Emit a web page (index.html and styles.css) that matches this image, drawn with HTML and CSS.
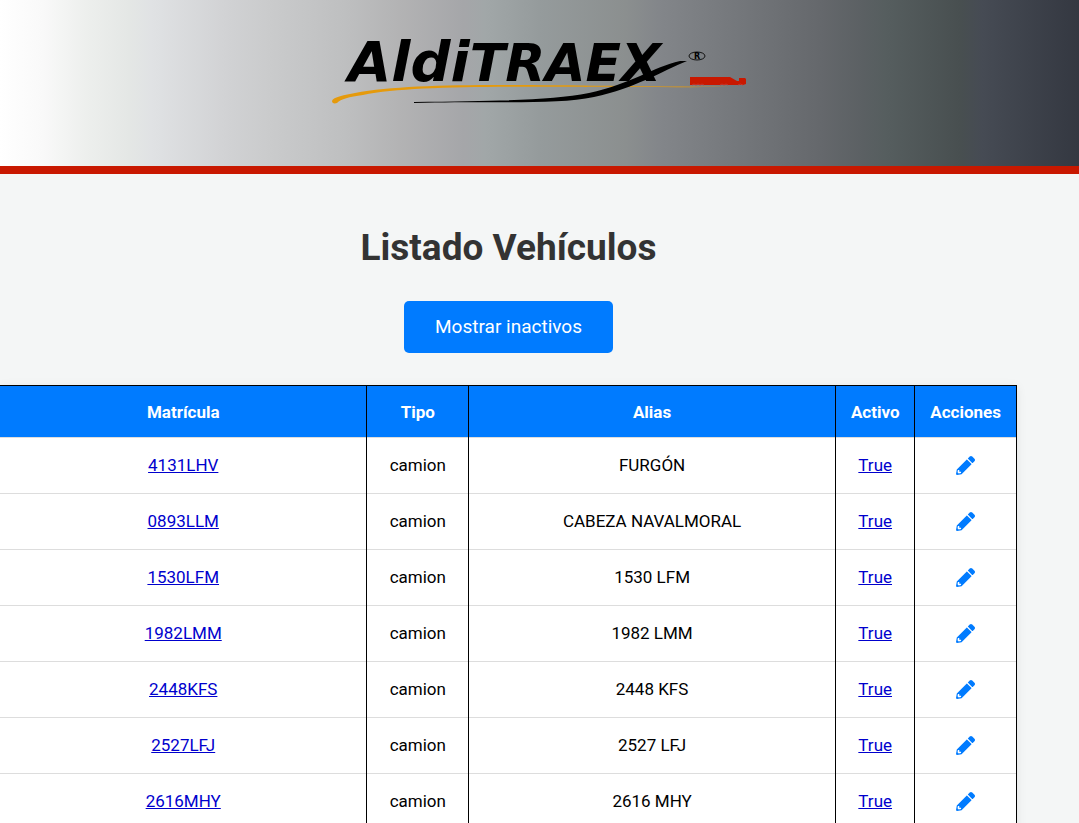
FILE: index.html
```html
<!DOCTYPE html>
<html lang="es">
<head>
<meta charset="utf-8">
<title>Listado Vehículos</title>
<link rel="stylesheet" href="styles.css">
</head>
<body>
<header class="site-header">
  <svg class="logo" viewBox="0 0 420 60" role="img" aria-label="AldiTRAEX">
    <text class="logo-name" x="18" y="33">Aldi<tspan class="logo-caps">TRAEX</tspan></text>
    <path d="M2 53 C3 49 15 47 25 45 C91 33 211 38 401 39 C221 40 93 35 33 47 C19 49 11 51 7 55 C4 56 2 55 2 53Z" fill="#e59a0c"/>
    <path d="M84 54 C175 53 222 52 259 45 C301 36 323 19 350 13 L357 13 C332 23 306 40 264 49 C226 57 170 53 84 55Z"/>
    <ellipse cx="367" cy="8" rx="8" ry="4" fill="none" stroke="#111"/>
    <text class="logo-mark" x="367" y="11">R</text>
    <path d="M360 29H400L407 33H409V30H415L416 31V36L413 37H360Z" fill="#c91800"/>
    <path d="M362 37q2-2 4 0q2-2 4 0q2-2 4 0M390 37q2-2 4 0q2-2 4 0M408 37q2-2 5 0" fill="none" stroke="#c8392b"/>
  </svg>
</header>
<main class="content">
  <h1 class="title">Listado Vehículos</h1>
  <button class="toggle" type="button">Mostrar inactivos</button>
  <table class="vehicles">
    <colgroup><col class="wide"><col class="mid"><col class="wide"><col class="narrow"><col class="mid"></colgroup>
    <thead><tr><th>Matrícula</th><th>Tipo</th><th>Alias</th><th>Activo</th><th>Acciones</th></tr></thead>
    <tbody>
      <tr><td><a href="#">4131LHV</a></td><td>camion</td><td>FURGÓN</td><td><a href="#">True</a></td><td><a class="edit" href="#" aria-label="Editar"><svg viewBox="0 0 512 512"><use href="#pencil"/></svg></a></td></tr>
      <tr><td><a href="#">0893LLM</a></td><td>camion</td><td>CABEZA NAVALMORAL</td><td><a href="#">True</a></td><td><a class="edit" href="#" aria-label="Editar"><svg viewBox="0 0 512 512"><use href="#pencil"/></svg></a></td></tr>
      <tr><td><a href="#">1530LFM</a></td><td>camion</td><td>1530 LFM</td><td><a href="#">True</a></td><td><a class="edit" href="#" aria-label="Editar"><svg viewBox="0 0 512 512"><use href="#pencil"/></svg></a></td></tr>
      <tr><td><a href="#">1982LMM</a></td><td>camion</td><td>1982 LMM</td><td><a href="#">True</a></td><td><a class="edit" href="#" aria-label="Editar"><svg viewBox="0 0 512 512"><use href="#pencil"/></svg></a></td></tr>
      <tr><td><a href="#">2448KFS</a></td><td>camion</td><td>2448 KFS</td><td><a href="#">True</a></td><td><a class="edit" href="#" aria-label="Editar"><svg viewBox="0 0 512 512"><use href="#pencil"/></svg></a></td></tr>
      <tr><td><a href="#">2527LFJ</a></td><td>camion</td><td>2527 LFJ</td><td><a href="#">True</a></td><td><a class="edit" href="#" aria-label="Editar"><svg viewBox="0 0 512 512"><use href="#pencil"/></svg></a></td></tr>
      <tr><td><a href="#">2616MHY</a></td><td>camion</td><td>2616 MHY</td><td><a href="#">True</a></td><td><a class="edit" href="#" aria-label="Editar"><svg viewBox="0 0 512 512"><use href="#pencil"/></svg></a></td></tr>
    </tbody>
  </table>
</main>
<svg class="sprite" width="0" height="0" aria-hidden="true">
  <symbol id="pencil" viewBox="0 0 512 512"><path d="M497.900 142.100l-46.100 46.100c-4.700 4.700-12.300 4.700-17 0l-111-111c-4.700-4.700-4.700-12.300 0-17l46.100-46.100c18.700-18.700 49.100-18.700 67.900 0l60.100 60.100c18.800 18.700 18.800 49.100 0 67.900zM284.200 99.800L21.600 362.400.4 483.900c-2.900 16.400 11.400 30.600 27.800 27.800l121.500-21.300 262.600-262.600c4.700-4.700 4.700-12.300 0-17l-111-111c-4.800-4.700-12.400-4.700-17.100 0zM88 424h48v36.300l-64.500 11.300-31.100-31.100L51.700 376H88v48z"/></symbol>
</svg>
</body>
</html>
```
FILE: styles.css
```css
* { box-sizing: border-box; }
html { overflow: hidden; }
body {
  margin: 0;
  background: #f4f6f6;
  color: #000;
  font: 17px/24px Roboto, sans-serif;
}
.site-header {
  display: flex;
  justify-content: center;
  padding: 48px 16px 58px;
  border-bottom: 8px solid #c81800;
  background: linear-gradient(to right, #fff 0%, #f9f9f9 4%, #edefed 8%, #e4e7e5 12%, #e0e2e4 14%, #d1d2d4 21%, #cacbcc 25%, #bebfc0 32%, #b3b3b4 37%, #a5a6a9 43%, #a1a7a8 45%, #959b9c 50%, #8b8f8f 58%, #83868a 61%, #797c80 66%, #6d7074 72%, #65686c 76%, #5b6063 80%, #565e5f 82%, #484f50 89%, #464b54 91%, #343841 100%);
}
.logo {
  width: 100%;
  max-width: 420px;
  height: 60px;
  overflow: visible;
}
.logo-name { font: italic bold 56px "DejaVu Sans", sans-serif; }
.logo-caps { font-size: 52px; }
.logo-mark { font: bold 8px "DejaVu Sans", sans-serif; text-anchor: middle; }
.content {
  display: flex;
  flex-direction: column;
  align-items: center;
  margin-right: 62px;
  padding-top: 50px;
}
.title {
  margin: 0 0 29px;
  color: #333;
  font-size: 37px;
  line-height: 48px;
}
.toggle {
  margin-bottom: 32px;
  padding: 14px 31px;
  border: 0;
  border-radius: 5px;
  background: #007bff;
  color: #fff;
  font: 19px/24px Roboto, sans-serif;
}
.vehicles {
  width: 100%;
  table-layout: fixed;
  border-collapse: collapse;
  background: #fff;
  text-align: center;
  box-shadow: 0 2px 10px rgba(0, 0, 0, .08);
}
.wide { width: 36.1%; }
.mid { width: 10%; }
.narrow { width: 7.8%; }
.vehicles th {
  height: 52px;
  padding: 0;
  border-top: 1px solid #000;
  border-right: 1px solid #000;
  background: #007bff;
  color: #fff;
}
.vehicles td {
  height: 56px;
  padding: 0 0 1px;
  border-top: 1px solid #ddd;
  border-right: 1px solid #000;
}
.vehicles a { color: #0000cd; }
.edit svg {
  display: block;
  width: 19px;
  height: 19px;
  margin: 0 auto;
  fill: #007bff;
}
.sprite { position: absolute; }
```
